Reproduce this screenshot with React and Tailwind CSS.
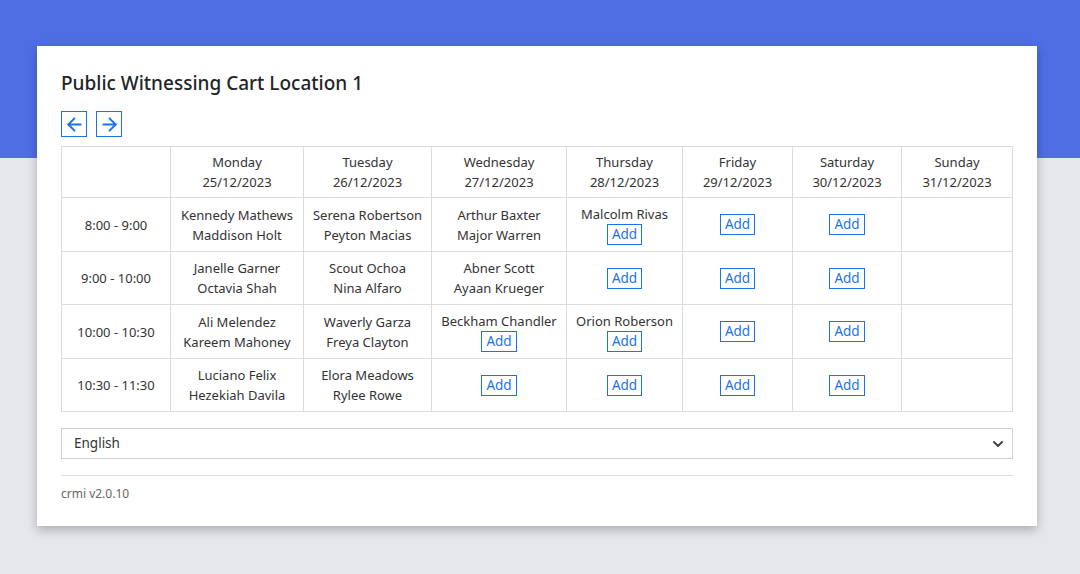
import { ArrowLeft, ArrowRight, ChevronDown } from "lucide-react";

const days = [
  ["Monday", "25/12/2023"],
  ["Tuesday", "26/12/2023"],
  ["Wednesday", "27/12/2023"],
  ["Thursday", "28/12/2023"],
  ["Friday", "29/12/2023"],
  ["Saturday", "30/12/2023"],
  ["Sunday", "31/12/2023"],
];

const widths = ["w-[109px]", "w-[133px]", "w-[128px]", "w-[135px]", "w-[116px]", "w-[110px]", "w-[109px]", "w-[111px]"];

// null = empty cell
const rows = [
  {
    time: "8:00 - 9:00",
    cells: [
      { names: ["Kennedy Mathews", "Maddison Holt"] },
      { names: ["Serena Robertson", "Peyton Macias"] },
      { names: ["Arthur Baxter", "Major Warren"] },
      { names: ["Malcolm Rivas"], add: true },
      { names: [], add: true },
      { names: [], add: true },
      null,
    ],
  },
  {
    time: "9:00 - 10:00",
    cells: [
      { names: ["Janelle Garner", "Octavia Shah"] },
      { names: ["Scout Ochoa", "Nina Alfaro"] },
      { names: ["Abner Scott", "Ayaan Krueger"] },
      { names: [], add: true },
      { names: [], add: true },
      { names: [], add: true },
      null,
    ],
  },
  {
    time: "10:00 - 10:30",
    cells: [
      { names: ["Ali Melendez", "Kareem Mahoney"] },
      { names: ["Waverly Garza", "Freya Clayton"] },
      { names: ["Beckham Chandler"], add: true },
      { names: ["Orion Roberson"], add: true },
      { names: [], add: true },
      { names: [], add: true },
      null,
    ],
  },
  {
    time: "10:30 - 11:30",
    cells: [
      { names: ["Luciano Felix", "Hezekiah Davila"] },
      { names: ["Elora Meadows", "Rylee Rowe"] },
      { names: [], add: true },
      { names: [], add: true },
      { names: [], add: true },
      { names: [], add: true },
      null,
    ],
  },
];

function AddButton() {
  return (
    <button className="inline-block border border-[#1a73e8] text-[#1a73e8] px-[4px] leading-[19px] text-[13.5px] bg-white">
      Add
    </button>
  );
}

export default function App() {
  return (
    <div
      className="min-h-screen bg-[#e5e7eb] text-[#212529] relative"
      style={{ fontFamily: '"Noto Sans", "Open Sans", sans-serif' }}
    >
      <div className="h-[158px] bg-[#4f6ee3]" />
      <div className="absolute left-[37px] top-[46px] w-[1000px] bg-white shadow-[0_4px_10px_rgba(0,0,0,0.25)] px-6 pt-6 pb-6">
        <h1 className="text-[19px] leading-[26px] font-medium text-[#212529]">
          Public Witnessing Cart Location 1
        </h1>
        <div className="flex gap-[9px] mt-[15px]">
          <button className="w-[26px] h-[26px] border border-[#1a73e8] flex items-center justify-center text-[#1a73e8]">
            <ArrowLeft size={21} strokeWidth={2.25} />
          </button>
          <button className="w-[26px] h-[26px] border border-[#1a73e8] flex items-center justify-center text-[#1a73e8]">
            <ArrowRight size={21} strokeWidth={2.25} />
          </button>
        </div>
        <table className="mt-[9px] w-[952px] border-collapse table-fixed text-[13px] leading-[20px] text-[#333]">
          <colgroup>
            {widths.map((w, i) => (
              <col key={i} className={w} />
            ))}
          </colgroup>
          <thead>
            <tr>
              <th className="border border-[#dcdcdc] font-normal py-[5px]"></th>
              {days.map(([d, date]) => (
                <th key={d} className="border border-[#dcdcdc] font-normal py-[5px] text-center">
                  <div>{d}</div>
                  <div>{date}</div>
                </th>
              ))}
            </tr>
          </thead>
          <tbody>
            {rows.map((r) => (
              <tr key={r.time}>
                <td className="border border-[#dcdcdc] text-center py-1.5">{r.time}</td>
                {r.cells.map((c, i) => (
                  <td key={i} className="border border-[#dcdcdc] text-center align-middle py-1.5">
                    {c &&
                      c.names.map((n) => (
                        <div key={n}>{n}</div>
                      ))}
                    {c && c.add && (
                      <div className="flex justify-center">
                        <AddButton />
                      </div>
                    )}
                  </td>
                ))}
              </tr>
            ))}
          </tbody>
        </table>
        <div className="mt-[16px] relative h-[31px] border border-[#cfcfcf] flex items-center px-3 text-[13.5px] text-[#333]">
          English
          <ChevronDown size={16} strokeWidth={3} className="absolute right-[6px] text-[#444]" />
        </div>
        <div className="mt-[16px] border-t border-[#dedede]" />
        <div className="mt-[10px] text-[12px] leading-[16px] text-[#666]">crmi v2.0.10</div>
      </div>
    </div>
  );
}
